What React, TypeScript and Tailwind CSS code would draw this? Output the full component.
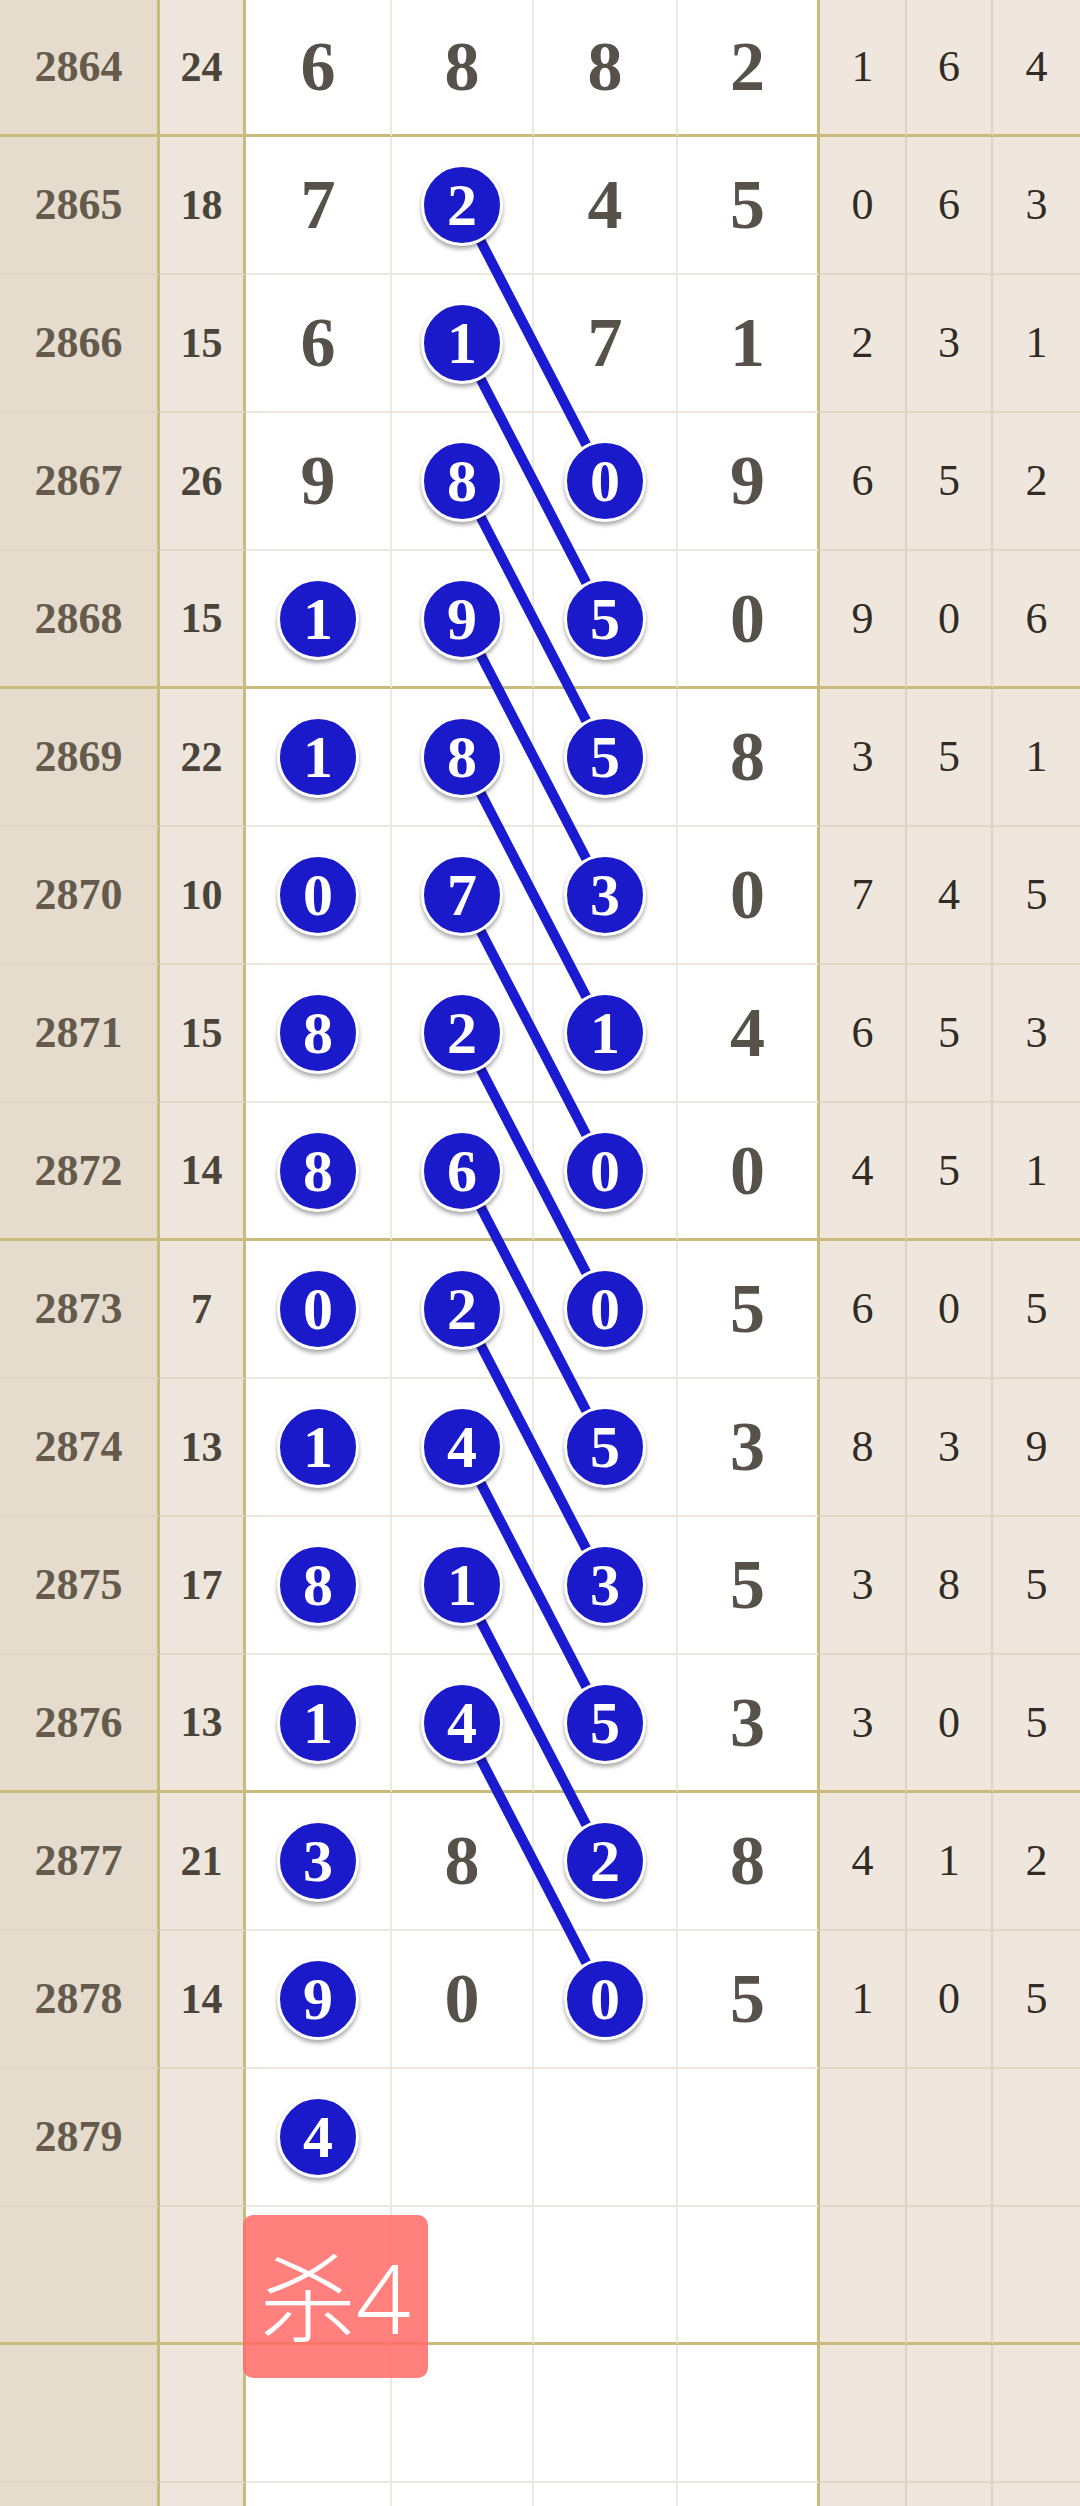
const serif = "font-['Liberation_Serif','Times_New_Roman',serif]";

type Row = { n: string; s: string; d: string[]; r: string[] };

const rows: Row[] = [
  { n: "2864", s: "24", d: ["6", "8", "8", "2"], r: ["1", "6", "4"] },
  { n: "2865", s: "18", d: ["7", "2", "4", "5"], r: ["0", "6", "3"] },
  { n: "2866", s: "15", d: ["6", "1", "7", "1"], r: ["2", "3", "1"] },
  { n: "2867", s: "26", d: ["9", "8", "0", "9"], r: ["6", "5", "2"] },
  { n: "2868", s: "15", d: ["1", "9", "5", "0"], r: ["9", "0", "6"] },
  { n: "2869", s: "22", d: ["1", "8", "5", "8"], r: ["3", "5", "1"] },
  { n: "2870", s: "10", d: ["0", "7", "3", "0"], r: ["7", "4", "5"] },
  { n: "2871", s: "15", d: ["8", "2", "1", "4"], r: ["6", "5", "3"] },
  { n: "2872", s: "14", d: ["8", "6", "0", "0"], r: ["4", "5", "1"] },
  { n: "2873", s: "7", d: ["0", "2", "0", "5"], r: ["6", "0", "5"] },
  { n: "2874", s: "13", d: ["1", "4", "5", "3"], r: ["8", "3", "9"] },
  { n: "2875", s: "17", d: ["8", "1", "3", "5"], r: ["3", "8", "5"] },
  { n: "2876", s: "13", d: ["1", "4", "5", "3"], r: ["3", "0", "5"] },
  { n: "2877", s: "21", d: ["3", "8", "2", "8"], r: ["4", "1", "2"] },
  { n: "2878", s: "14", d: ["9", "0", "0", "5"], r: ["1", "0", "5"] },
  { n: "2879", s: "", d: ["4", "", "", ""], r: ["", "", ""] },
  { n: "", s: "", d: ["", "", "", ""], r: ["", "", ""] },
  { n: "", s: "", d: ["", "", "", ""], r: ["", "", ""] },
  { n: "", s: "", d: ["", "", "", ""], r: ["", "", ""] },
];

// which digit columns are shown as blue balls
const isBall = (i: number, c: number) =>
  (c === 0 && i >= 4 && i <= 15) ||
  (c === 1 && i >= 1 && i <= 12) ||
  (c === 2 && i >= 3 && i <= 14);

const rowTop = (i: number) => (i === 0 ? 0 : 137 + (i - 1) * 138);
const rowMid = (i: number) => rowTop(i) + 68;

const digitW = ["w-[146px]", "w-[142px]", "w-[144px]", "w-[142px]"];
const rightW = ["w-[87px]", "w-[86px]", "flex-1"];

function Ball({ v }: { v: string }) {
  return (
    <div className="relative z-10 flex h-[82px] w-[82px] items-center justify-center rounded-full border-[3px] border-white bg-[#1a1acb] shadow-[0_3px_4px_rgba(0,0,0,0.35)]">
      <span className={`${serif} text-[60px] font-bold leading-none text-white`}>{v}</span>
    </div>
  );
}

export default function App() {
  return (
    <div className="relative h-[2506px] w-[1080px] overflow-hidden bg-white">
      {rows.map((row, i) => {
        const gold = i % 4 === 0;
        const h = i === 0 ? "h-[137px]" : "h-[138px]";
        const bWhite = gold ? "border-b-[3px] border-b-[#c9bb7b]" : "border-b-2 border-b-[#ece8df]";
        const bBeige = gold ? "border-b-[3px] border-b-[#c9bb7b]" : "border-b-2 border-b-[#e0d7c8]";
        return (
          <div key={i} className={`flex ${h}`}>
            <div
              className={`flex w-[160px] items-center justify-center border-r-[3px] border-r-[#c9bb7b] bg-[#e6dccd] ${bBeige}`}
            >
              <span className={`${serif} text-[44px] font-bold text-[#645b4c]`}>{row.n}</span>
            </div>
            <div
              className={`flex w-[86px] items-center justify-center border-r-[3px] border-r-[#c9bb7b] bg-[#eee6dc] ${bBeige}`}
            >
              <span className={`${serif} text-[42px] font-bold text-[#4a443a]`}>{row.s}</span>
            </div>
            {row.d.map((v, c) => (
              <div
                key={c}
                className={`flex items-center justify-center ${digitW[c]} ${
                  c === 3 ? "border-r-[3px] border-r-[#c9bb7b]" : "border-r-2 border-r-[#ece9e1]"
                } ${bWhite}`}
              >
                {v !== "" &&
                  (isBall(i, c) ? (
                    <Ball v={v} />
                  ) : (
                    <span className={`${serif} text-[70px] font-bold leading-none text-[#56524a]`}>{v}</span>
                  ))}
              </div>
            ))}
            {row.r.map((v, c) => (
              <div
                key={c}
                className={`flex items-center justify-center bg-[#efe7dd] ${rightW[c]} ${
                  c < 2 ? "border-r-2 border-r-[#ddd3c4]" : ""
                } ${bBeige}`}
              >
                <span className={`${serif} text-[44px] text-[#302b24]`}>{v}</span>
              </div>
            ))}
          </div>
        );
      })}

      {/* connecting lines, col 2 row i -> col 3 row i+2 */}
      <svg className="pointer-events-none absolute left-0 top-0" width={1080} height={2506}>
        {Array.from({ length: 12 }, (_, k) => k + 1).map((i) => (
          <line
            key={i}
            x1={462}
            y1={rowMid(i)}
            x2={605}
            y2={rowMid(i + 2)}
            stroke="#1a1ad0"
            strokeWidth={10}
          />
        ))}
      </svg>

      <div className="absolute left-[243px] top-[2215px] z-20 flex h-[163px] w-[185px] items-center justify-center rounded-[10px] bg-[rgba(255,106,102,0.85)]">
        <span className="font-['Noto_Sans','Noto_Sans_CJK_SC',sans-serif] text-[96px] font-light leading-none text-white">
          杀4
        </span>
      </div>
    </div>
  );
}
